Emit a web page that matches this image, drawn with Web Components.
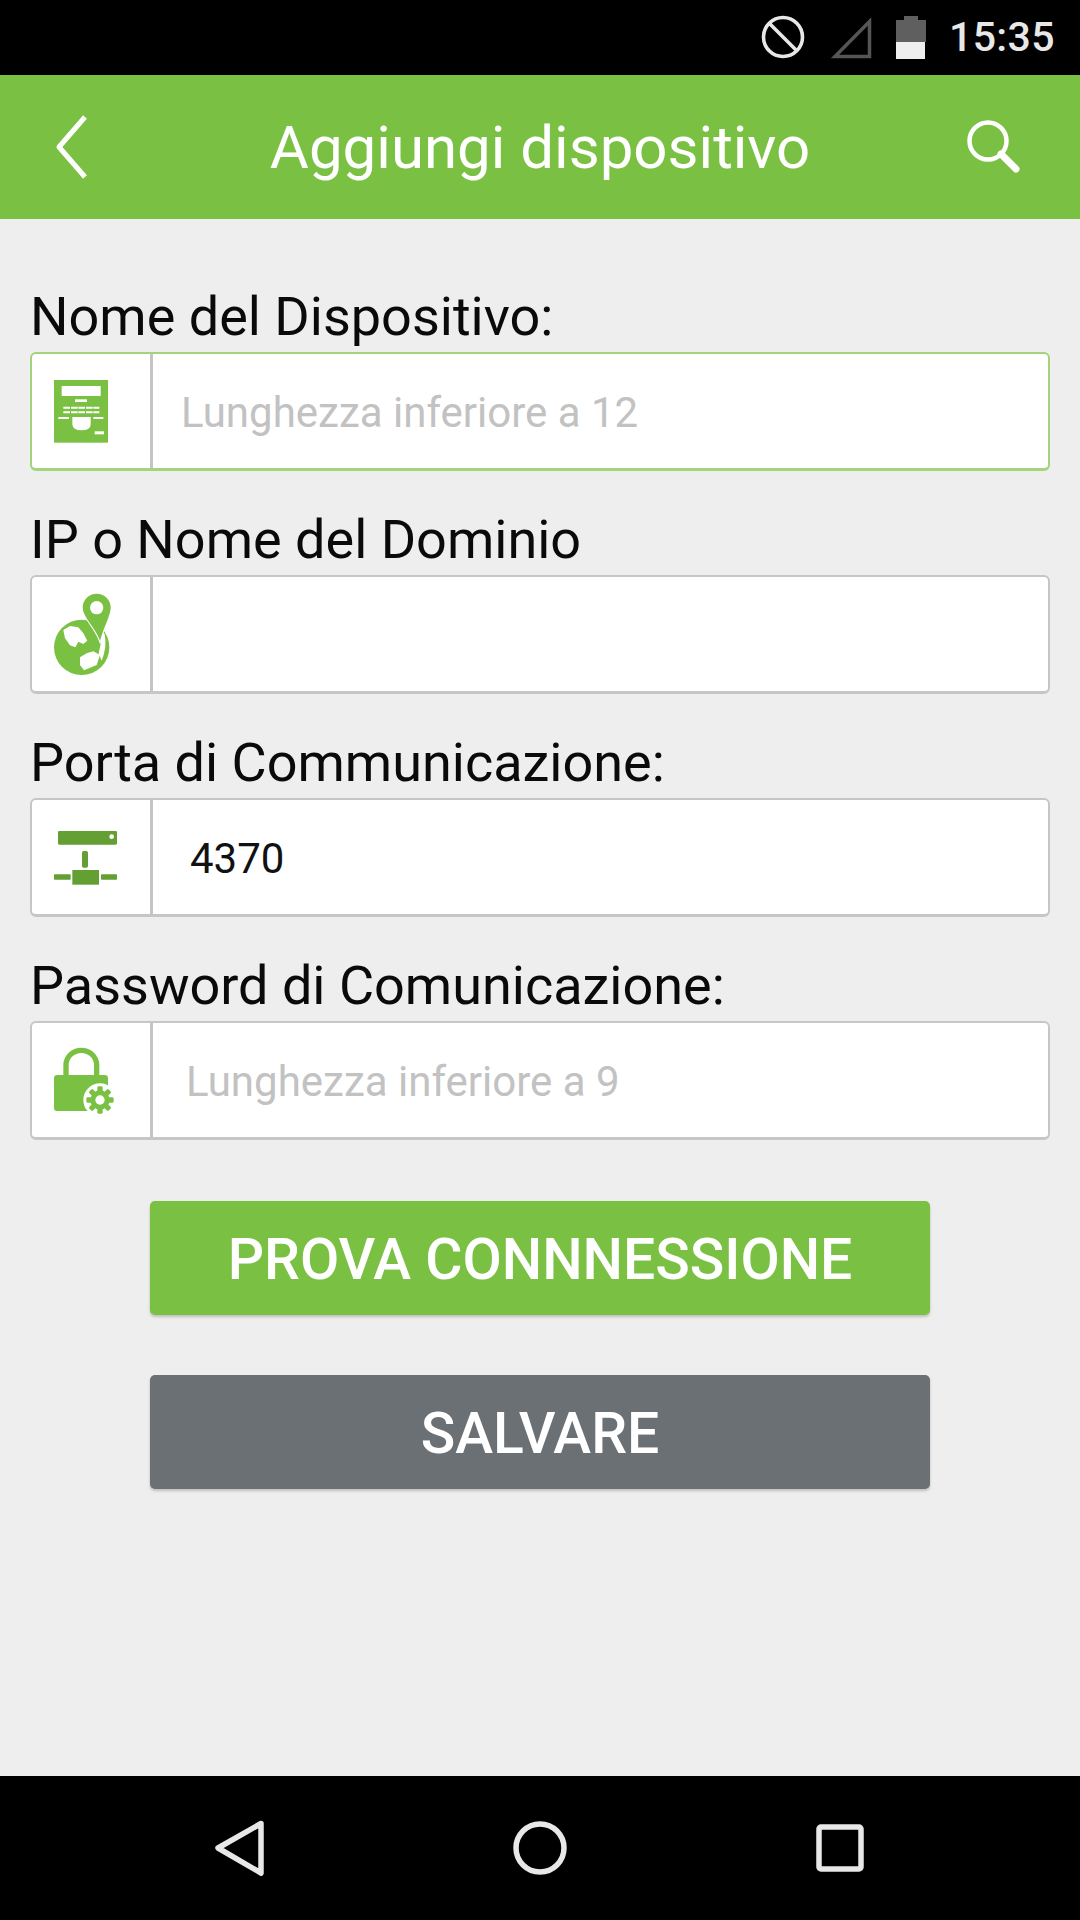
<!DOCTYPE html>
<html>
<head>
<meta charset="utf-8">
<title>Aggiungi dispositivo</title>
<style>
html, body { margin: 0; padding: 0; }
body { width: 1080px; height: 1920px; background: #eeeeee; font-family: Roboto, "Liberation Sans", sans-serif; }
</style>
</head>
<body>
<phone-screen>
    <status-bar></status-bar>
    <title-bar>Aggiungi dispositivo</title-bar>
    <form-area>
        <form-field label="Nome del Dispositivo:" hint="Lunghezza inferiore a 12" inset="28" active>
            <svg slot="icon" width="120" height="119" viewBox="30 36 360 357">
                <rect x="102" y="120" width="162" height="188" fill="#7ac143"/>
                <g fill="#fff">
                    <rect x="125" y="138" width="117" height="30"/>
                    <rect x="165" y="178" width="36" height="8"/>
                    <path d="M130 200h20v6h-20zM153 200h20v6h-20zM175 200h20v6h-20zM198 200h20v6h-20zM220 200h18v6h-18zM130 214h20v6h-20zM153 214h20v6h-20zM175 214h20v6h-20zM198 214h20v6h-20zM220 214h18v6h-18z"/>
                    <path d="M115 231h32v6h-32zM220 231h30v6h-30z"/>
                    <path d="M157 231h55v22q0 18-27 18t-28-18z"/>
                    <rect x="224" y="274" width="28" height="9"/>
                </g>
            </svg>
        </form-field>
        <form-field label="IP o Nome del Dominio">
            <svg slot="icon" width="120" height="119" viewBox="30 15 360 357">
                <circle cx="185" cy="232" r="83" fill="#7ac143"/>
                <g fill="#fff">
                    <path d="M130 180L150 168L175 172L190 190L202 212L190 222L175 215L166 232L150 226L135 205z"/>
                    <path d="M180 262L200 250L220 244L240 255L230 285L192 301L180 285z"/>
                    <path d="M244 182L254 192Q262 230 245 272L236 250L242 222z"/>
                </g>
                <path d="M230 71a42 42 0 0 1 42 42c0 22-20 56-32 99c-14-40-52-72-52-99a42 42 0 0 1 42-42z" fill="#7ac143" stroke="#fff" stroke-width="7" paint-order="stroke"/>
                <circle cx="230" cy="113" r="20" fill="#fff"/>
            </svg>
        </form-field>
        <form-field label="Porta di Communicazione:" value="4370" inset="37">
            <svg slot="icon" width="120" height="119" viewBox="30 24 360 357">
                <g fill="#639f33">
                    <rect x="114" y="123" width="177" height="41" rx="4"/>
                    <rect x="186" y="183" width="18" height="50" rx="5"/>
                    <rect x="157" y="240" width="80" height="44"/>
                    <rect x="102" y="253" width="50" height="16" rx="2"/>
                    <rect x="243" y="253" width="48" height="16" rx="2"/>
                </g>
                <circle cx="275" cy="140" r="7" fill="#fff"/>
            </svg>
        </form-field>
        <form-field label="Password di Comunicazione:" hint="Lunghezza inferiore a 9" inset="33">
            <svg slot="icon" width="120" height="119" viewBox="30 18 360 357">
                <path d="M138 185v-35a45 43 0 0 1 92 0v35" fill="none" stroke="#7ac143" stroke-width="16"/>
                <rect x="102" y="180" width="162" height="108" rx="10" fill="#7ac143"/>
                <circle cx="240" cy="255" r="50" fill="#fff"/>
                <g fill="#7ac143">
                    <circle cx="240" cy="255" r="29"/>
                    <g>
                        <rect x="232" y="214" width="16" height="82" rx="4"/>
                        <rect x="232" y="214" width="16" height="82" rx="4" transform="rotate(45 240 255)"/>
                        <rect x="232" y="214" width="16" height="82" rx="4" transform="rotate(90 240 255)"/>
                        <rect x="232" y="214" width="16" height="82" rx="4" transform="rotate(135 240 255)"/>
                    </g>
                </g>
                <circle cx="240" cy="255" r="14" fill="#fff"/>
            </svg>
        </form-field>
        <button-row>
            <action-button>PROVA CONNNESSIONE</action-button>
            <action-button kind="grey">SALVARE</action-button>
        </button-row>
    </form-area>
    <nav-bar></nav-bar>
</phone-screen>

<script>
(function () {

    function define(name, css, html, extra) {
        const template = document.createElement('template');
        template.innerHTML = `<style>${css}</style>${html}`;

        class Base extends HTMLElement {
            constructor() {
                super();
                this.attachShadow({ mode: 'open' });
                this.shadowRoot.appendChild(template.content.cloneNode(true));
            }
            connectedCallback() {
                if (extra) extra.call(this);
            }
        }
        window.customElements.define(name, Base);
    }

    define('phone-screen', `
:host {
    display: flex;
    flex-direction: column;
    width: 1080px;
    height: 1920px;
    overflow: hidden;
    background: #eeeeee;
    font-family: Roboto, "Liberation Sans", sans-serif;
}`, `<slot></slot>`);

    define('status-bar', `
:host {
    display: flex;
    flex: none;
    align-items: center;
    justify-content: flex-end;
    height: 75px;
    background: #000;
    padding-right: 25px;
    color: #e8e8e8;
}
svg { display: block; flex: none; }
span {
    font-size: 41px;
    font-weight: 500;
    line-height: 75px;
    margin-left: 23px;
    letter-spacing: 0.4px;
}`, `
<svg width="139" height="75" viewBox="760 0 139 75">
    <circle cx="786" cy="37" r="19.5" fill="none" stroke="#e8e8e8" stroke-width="3.6"/>
    <path d="M773 24l26 26" stroke="#e8e8e8" stroke-width="3.6"/>
    <path d="M838 56.5l34.500-35v35z" fill="none" stroke="#555" stroke-width="3.500"/>
</svg>
<svg width="30" height="75" viewBox="899 0 30 75">
    <path d="M899 20h8v-4h14v4h8v22h-30z" fill="#5f5f5f"/>
    <rect x="899" y="42" width="29" height="17" fill="#eeeeee"/>
</svg>
<span>15:35</span>`);

    define('title-bar', `
:host {
    display: flex;
    flex: none;
    align-items: center;
    justify-content: space-between;
    height: 144px;
    background: #7ac143;
    color: #fff;
}
svg { display: block; flex: none; }
div {
    flex: 1;
    text-align: center;
    font-size: 60px;
    line-height: 147px;
    white-space: nowrap;
}`, `
<svg width="120" height="144" viewBox="0 75 120 144">
    <path d="M85 117L59 147L85 177" fill="none" stroke="#fff" stroke-width="5" stroke-linejoin="round"/>
</svg>
<div><slot></slot></div>
<svg width="120" height="144" viewBox="960 75 120 144">
    <circle cx="988" cy="141" r="18.500" fill="none" stroke="#fff" stroke-width="4.500"/>
    <path d="M1001 154L1016 169" stroke="#fff" stroke-width="7" stroke-linecap="round"/>
</svg>`);

    define('form-area', `
:host {
    display: block;
    flex: 1;
    padding: 29px 30px 0;
}`, `<slot></slot>`);

    define('form-field', `
:host {
    display: block;
    font-family: Roboto, "Liberation Sans", sans-serif;
}
.label {
    height: 104px;
    box-sizing: border-box;
    padding-top: 31px;
    font-size: 54px;
    line-height: 75px;
    color: #0a0a0a;
    white-space: nowrap;
}
.box {
    display: flex;
    height: 119px;
    box-sizing: border-box;
    background: #fff;
    border: 2px solid #c6c6c6;
    border-bottom-width: 3px;
    border-radius: 6px;
}
:host([active]) .box {
    border-color: #a3d47c;
}
.icon {
    flex: none;
    width: 118px;
    border-right: 3px solid #c4c4c4;
    overflow: hidden;
}
::slotted(svg) {
    display: block;
    margin: -2px 0 0 -2px;
}
.text {
    flex: 1;
    font-size: 42px;
    line-height: 118px;
    white-space: nowrap;
    color: #111;
}
.text.hint {
    color: #c2c2c2;
}`, `
<div class="label"></div>
<div class="box">
    <div class="icon"><slot name="icon"></slot></div>
    <div class="text"></div>
</div>`, function () {
        const root = this.shadowRoot;
        root.querySelector('.label').textContent = this.getAttribute('label');
        const text = root.querySelector('.text');
        text.style.paddingLeft = (this.getAttribute('inset') || 0) + 'px';
        if (this.hasAttribute('hint')) {
            text.textContent = this.getAttribute('hint');
            text.classList.add('hint');
        } else {
            text.textContent = this.getAttribute('value') || '';
        }
    });

    define('button-row', `
:host {
    display: flex;
    flex-direction: column;
    align-items: center;
    gap: 60px;
    padding-top: 61px;
}`, `<slot></slot>`);

    define('action-button', `
:host {
    display: block;
    width: 780px;
    height: 114px;
    background: #7ac143;
    border-radius: 5px;
    box-shadow: 0 2px 3px rgba(0, 0, 0, .2);
    color: #fff;
    font-size: 57px;
    font-weight: 500;
    line-height: 117px;
    text-align: center;
    white-space: nowrap;
}
:host([kind="grey"]) {
    background: #6b7074;
}`, `<slot></slot>`);

    define('nav-bar', `
:host {
    display: block;
    flex: none;
    height: 144px;
    background: #000;
}
svg { display: block; }`, `
<svg width="1080" height="144" viewBox="0 1776 1080 144">
    <path d="M261 1823.500L218 1848L261 1873z" fill="none" stroke="#e8e8e8" stroke-width="5.500" stroke-linejoin="round"/>
    <circle cx="540" cy="1848" r="24" fill="none" stroke="#e8e8e8" stroke-width="5.500"/>
    <rect x="819" y="1827" width="42" height="42" rx="2" fill="none" stroke="#e8e8e8" stroke-width="5.500"/>
</svg>`);
})();
</script>
</body>
</html>
